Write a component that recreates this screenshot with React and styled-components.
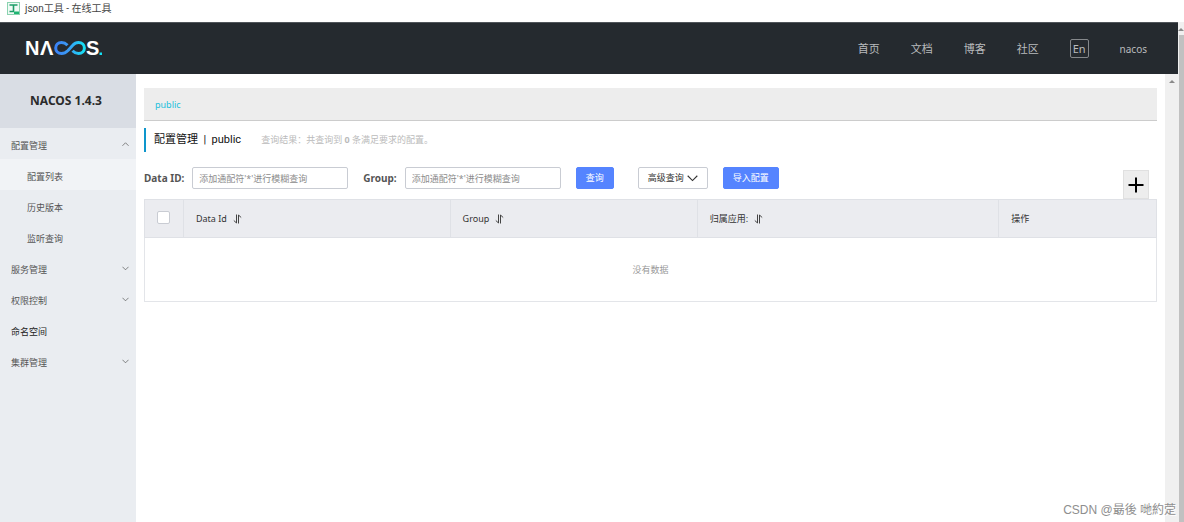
import React, { useState } from 'react'
import styled, { createGlobalStyle } from 'styled-components'

const GlobalStyle = createGlobalStyle`
*{
    box-sizing: border-box;
}
body{
    margin: 0;
    background-color: white;
    color: #333;
    font-family: "Noto Sans", "Noto Sans CJK SC", sans-serif;
    font-size: 9px;
    line-height: 16px;
}
button, input{
    font: inherit;
}
a{
    color: inherit;
    text-decoration: none;
}
`
const Page = styled.div`
position: relative;
display: flex;
flex-direction: column;
height: 100vh;
overflow: hidden;
`
const Bookmarks = styled.div`
display: flex;
align-items: center;
gap: 5px;
height: 22px;
padding: 0 7px 5px;
flex-shrink: 0;
color: #444;
`
const BookmarkLink = styled.a`
font-family: Roboto, "Noto Sans CJK SC", sans-serif;
font-size: 10px;
`
const Browser = styled.div`
display: flex;
flex: 1;
min-height: 0;
`
const Console = styled.div`
display: flex;
flex-direction: column;
flex: 1;
min-width: 0;
`
const Header = styled.header`
display: flex;
align-items: center;
justify-content: space-between;
height: 52px;
flex-shrink: 0;
padding: 0 31px 0 25px;
background-color: #252a2f;
border-top: 1px solid #50555a;
color: #b9bbbd;
`
const Nav = styled.nav`
display: flex;
align-items: center;
gap: 31px;
font-size: 11px;
`
const LangButton = styled.button`
height: 19px;
padding: 0 2px;
background: none;
border: 1px solid #85888b;
border-radius: 2px;
color: #b9bbbd;
font-size: 11px;
line-height: 16px;
`
const UserLink = styled.a`
font-size: 10px;
`
const Body = styled.div`
display: flex;
flex: 1;
min-height: 0;
`
const Sidebar = styled.aside`
width: 136px;
flex-shrink: 0;
background-color: #eaedf1;
`
const Version = styled.h1`
display: flex;
align-items: center;
justify-content: center;
height: 54px;
margin: 0;
padding-right: 4px;
background-color: #d9dde4;
color: #2b2b2b;
font-size: 12px;
font-weight: 700;
`
const Menu = styled.ul`
margin: 0;
padding: 0;
list-style: none;
`
const MenuLink = styled.a`
display: flex;
align-items: center;
justify-content: space-between;
height: 31px;
padding: 4px 7px 0 ${({ $sub }) => ($sub ? '27px' : '11px')};
background-color: ${({ $active }) => ($active ? '#f1f3f6' : 'transparent')};
color: ${({ $dark }) => ($dark ? '#222' : '#555')};
svg{
    margin-bottom: 2px;
}
`
const Main = styled.main`
flex: 1;
min-width: 0;
padding: 14px 8px 0;
`
const Namespace = styled.div`
display: flex;
align-items: center;
height: 33px;
padding: 2px 11px 0;
background-color: #ededed;
border-bottom: 1px solid #ccc;
color: #22c0dc;
`
const TitleRow = styled.div`
display: flex;
align-items: center;
gap: 20px;
height: 24px;
margin-top: 7px;
padding-left: 8px;
border-left: 2px solid #0e96cc;
color: #bbb;
`
const Title = styled.h2`
margin: 0;
color: #111;
font-family: Roboto, "Noto Sans CJK SC", sans-serif;
font-size: 11px;
font-weight: 400;
white-space: pre;
`
const Toolbar = styled.form`
display: flex;
align-items: flex-start;
margin: 15px 0 0;
`
const Label = styled.label`
margin-right: 8px;
color: #555;
font-size: 10px;
font-weight: 700;
line-height: 22px;
`
const TextInput = styled.input`
width: 156px;
height: 22px;
margin-right: 15px;
padding: 0 6px;
border: 1px solid #c9ccd3;
border-radius: 2px;
outline: none;
&::placeholder{
    color: #8c8c8c;
}
`
const Button = styled.button`
display: flex;
align-items: center;
justify-content: center;
gap: 3px;
height: 22px;
padding: 0 9px;
border: 1px solid ${({ $primary }) => ($primary ? '#5584ff' : '#c9ccd3')};
border-radius: 2px;
background-color: ${({ $primary }) => ($primary ? '#5584ff' : 'white')};
color: ${({ $primary }) => ($primary ? 'white' : '#333')};
cursor: pointer;
`
const AdvancedButton = styled(Button)`
margin: 0 15px 0 24px;
`
const AddButton = styled.button`
display: flex;
align-items: center;
justify-content: center;
width: 26px;
height: 29px;
margin: 3px 8px 0 auto;
padding: 0;
border: 1px solid #e0e0e0;
background-color: #ededed;
cursor: pointer;
`
const Table = styled.table`
width: 100%;
table-layout: fixed;
border-collapse: collapse;
border: 1px solid #e3e5e9;
`
const Th = styled.th`
width: ${({ $width }) => $width};
height: 38px;
padding: 0 12px;
border: 1px solid #dfe1e6;
background-color: #ebecf0;
font-weight: 400;
text-align: left;
`
const CheckTh = styled(Th)`
padding: 0 2px 4px 0;
text-align: center;
`
const Checkbox = styled.input`
appearance: none;
width: 13px;
height: 13px;
margin: 0;
border: 1px solid #c9ccd3;
border-radius: 2px;
background-color: white;
vertical-align: middle;
&:checked{
    background-color: #5584ff;
}
`
const SortLabel = styled.span`
display: flex;
align-items: center;
gap: 6px;
`
const Empty = styled.td`
height: 64px;
padding: 0;
color: #999;
text-align: center;
`
const Scrollbar = styled.div`
display: flex;
flex-direction: column;
align-items: center;
width: ${({ $width }) => $width}px;
flex-shrink: 0;
padding-top: 6px;
background-color: #f0f0f0;
overflow: hidden;
`
const Thumb = styled.div`
align-self: stretch;
flex: 1;
margin: 4px 0 0 1px;
background-color: #c1c1c1;
`
const Watermark = styled.div`
position: absolute;
right: 8px;
bottom: 3px;
color: #8e8e8e;
font-family: "Liberation Sans", "Noto Sans CJK SC", sans-serif;
font-size: 12px;
line-height: 18px;
text-shadow: 1px 1px 0 white;
`

function Logo() {
  return (
    <svg width="80" height="32" viewBox="0 0 80 32" role="img" aria-label="NACOS">
      <defs>
        <linearGradient id="loop" x1="0" x2="1">
          <stop offset="0" stopColor="#3b82f6" />
          <stop offset="0.45" stopColor="#3b9cf5" />
          <stop offset="1" stopColor="#14e1f5" />
        </linearGradient>
      </defs>
      <g fill="white" fontFamily="Liberation Sans, sans-serif" fontSize="20" fontWeight="700">
        <text x="0" y="22">N</text>
        <text x="15" y="22">Λ</text>
        <text x="61" y="22">S</text>
      </g>
      <path
        d="M43 17.5 C40.5 20 38.5 20.6 36.5 20.6 C33 20.6 30.7 18.2 30.7 15 C30.7 11.8 33 9.4 36.5 9.4 C38.8 9.4 40.7 10.3 42.5 12.2 M43 17.5 L48 12 C49.5 10.2 51.3 9.4 53.5 9.4 C57 9.4 59.4 11.8 59.4 15 C59.4 18.2 57 20.6 53.5 20.6 C51.2 20.6 49.3 19.7 47.5 17.8"
        fill="none"
        stroke="url(#loop)"
        strokeWidth="3"
      />
      <rect x="74.5" y="19.5" width="2.5" height="2.5" fill="#14e1f5" />
    </svg>
  )
}

function ToolIcon() {
  return (
    <svg width="13" height="13" viewBox="0 0 13 13" aria-hidden="true">
      <rect x="0.5" y="0.5" width="12" height="12" fill="#effaf5" stroke="#8bd3b0" />
      <path d="M2.5 3 H10.5 M6.5 3 V9.5 M2.5 9.5 H7" fill="none" stroke="#1d9e68" strokeWidth="1.6" />
      <rect x="7" y="9.5" width="5" height="2.5" fill="#1fb473" />
    </svg>
  )
}

function Chevron({ size = 7, up }) {
  return (
    <svg width={size} height={size} viewBox="0 0 8 8" fill="none" stroke="currentColor" strokeWidth="0.8" aria-hidden="true">
      <path d={up ? 'M0.5 5.5 L4 2 L7.5 5.5' : 'M0.5 2 L4 5.5 L7.5 2'} />
    </svg>
  )
}

function SortIcon() {
  return (
    <svg width="9" height="10" viewBox="0 0 9 10" fill="none" stroke="#444" aria-hidden="true">
      <path d="M3.5 0.5 V9 L0.8 6.5 M5.5 9.5 V1 L8.2 3.5" />
    </svg>
  )
}

function ScrollArrow() {
  return (
    <svg width="6" height="3" viewBox="0 0 6 3" aria-hidden="true">
      <path d="M0 3 L3 0 L6 3 Z" fill="#8a8a8a" />
    </svg>
  )
}

const links = ['首页', '文档', '博客', '社区']

const menu = [
  { name: '配置管理', arrow: true, up: true },
  { name: '配置列表', sub: true, active: true },
  { name: '历史版本', sub: true },
  { name: '监听查询', sub: true },
  { name: '服务管理', arrow: true },
  { name: '权限控制', arrow: true },
  { name: '命名空间', dark: true },
  { name: '集群管理', arrow: true },
]

const columns = [
  { name: 'Data Id', width: '27.4%', sort: true },
  { name: 'Group', width: '25.4%', sort: true },
  { name: '归属应用:', width: '31%', sort: true },
  { name: '操作', width: '16.2%' },
]

function App() {
  const [dataId, setDataId] = useState('')
  const [group, setGroup] = useState('')

  return (
    <Page>
      <GlobalStyle />
      <Bookmarks>
        <ToolIcon />
        <BookmarkLink href="#json">json工具 - 在线工具</BookmarkLink>
      </Bookmarks>
      <Browser>
        <Console>
          <Header>
            <Logo />
            <Nav>
              {links.map((name) => (
                <a href="#nav" key={name}>{name}</a>
              ))}
              <LangButton type="button">En</LangButton>
              <UserLink href="#user">nacos</UserLink>
            </Nav>
          </Header>
          <Body>
            <Sidebar>
              <Version>NACOS 1.4.3</Version>
              <Menu>
                {menu.map(({ name, arrow, up, sub, active, dark }) => (
                  <li key={name}>
                    <MenuLink href="#menu" $sub={sub} $active={active} $dark={dark}>
                      {name}
                      {arrow && <Chevron up={up} />}
                    </MenuLink>
                  </li>
                ))}
              </Menu>
            </Sidebar>
            <Main>
              <Namespace>
                <a href="#public">public</a>
              </Namespace>
              <TitleRow>
                <Title>配置管理  |  public</Title>
                <span>查询结果：共查询到 <b>0</b> 条满足要求的配置。</span>
              </TitleRow>
              <Toolbar onSubmit={(e) => e.preventDefault()}>
                <Label htmlFor="dataId">Data ID:</Label>
                <TextInput
                  id="dataId"
                  placeholder="添加通配符'*'进行模糊查询"
                  value={dataId}
                  onChange={(e) => setDataId(e.target.value)}
                />
                <Label htmlFor="group">Group:</Label>
                <TextInput
                  id="group"
                  placeholder="添加通配符'*'进行模糊查询"
                  value={group}
                  onChange={(e) => setGroup(e.target.value)}
                />
                <Button $primary>查询</Button>
                <AdvancedButton type="button">
                  高级查询
                  <Chevron size={11} />
                </AdvancedButton>
                <Button type="button" $primary>导入配置</Button>
                <AddButton type="button" aria-label="新建配置">
                  <svg width="16" height="16" viewBox="0 0 16 16" stroke="black" strokeWidth="2" aria-hidden="true">
                    <path d="M8 0.5 V15.5 M0.5 8 H15.5" />
                  </svg>
                </AddButton>
              </Toolbar>
              <Table>
                <thead>
                  <tr>
                    <CheckTh $width="39px">
                      <Checkbox type="checkbox" aria-label="全选" />
                    </CheckTh>
                    {columns.map(({ name, width, sort }) => (
                      <Th key={name} $width={width}>
                        <SortLabel>
                          {name}
                          {sort && <SortIcon />}
                        </SortLabel>
                      </Th>
                    ))}
                  </tr>
                </thead>
                <tbody>
                  <tr>
                    <Empty colSpan={5}>没有数据</Empty>
                  </tr>
                </tbody>
              </Table>
            </Main>
            <Scrollbar $width={13}>
              <ScrollArrow />
            </Scrollbar>
          </Body>
        </Console>
        <Scrollbar $width={6}>
          <ScrollArrow />
          <Thumb />
        </Scrollbar>
      </Browser>
      <Watermark>CSDN @朂後 哋約萣</Watermark>
    </Page>
  )
}

export default App
